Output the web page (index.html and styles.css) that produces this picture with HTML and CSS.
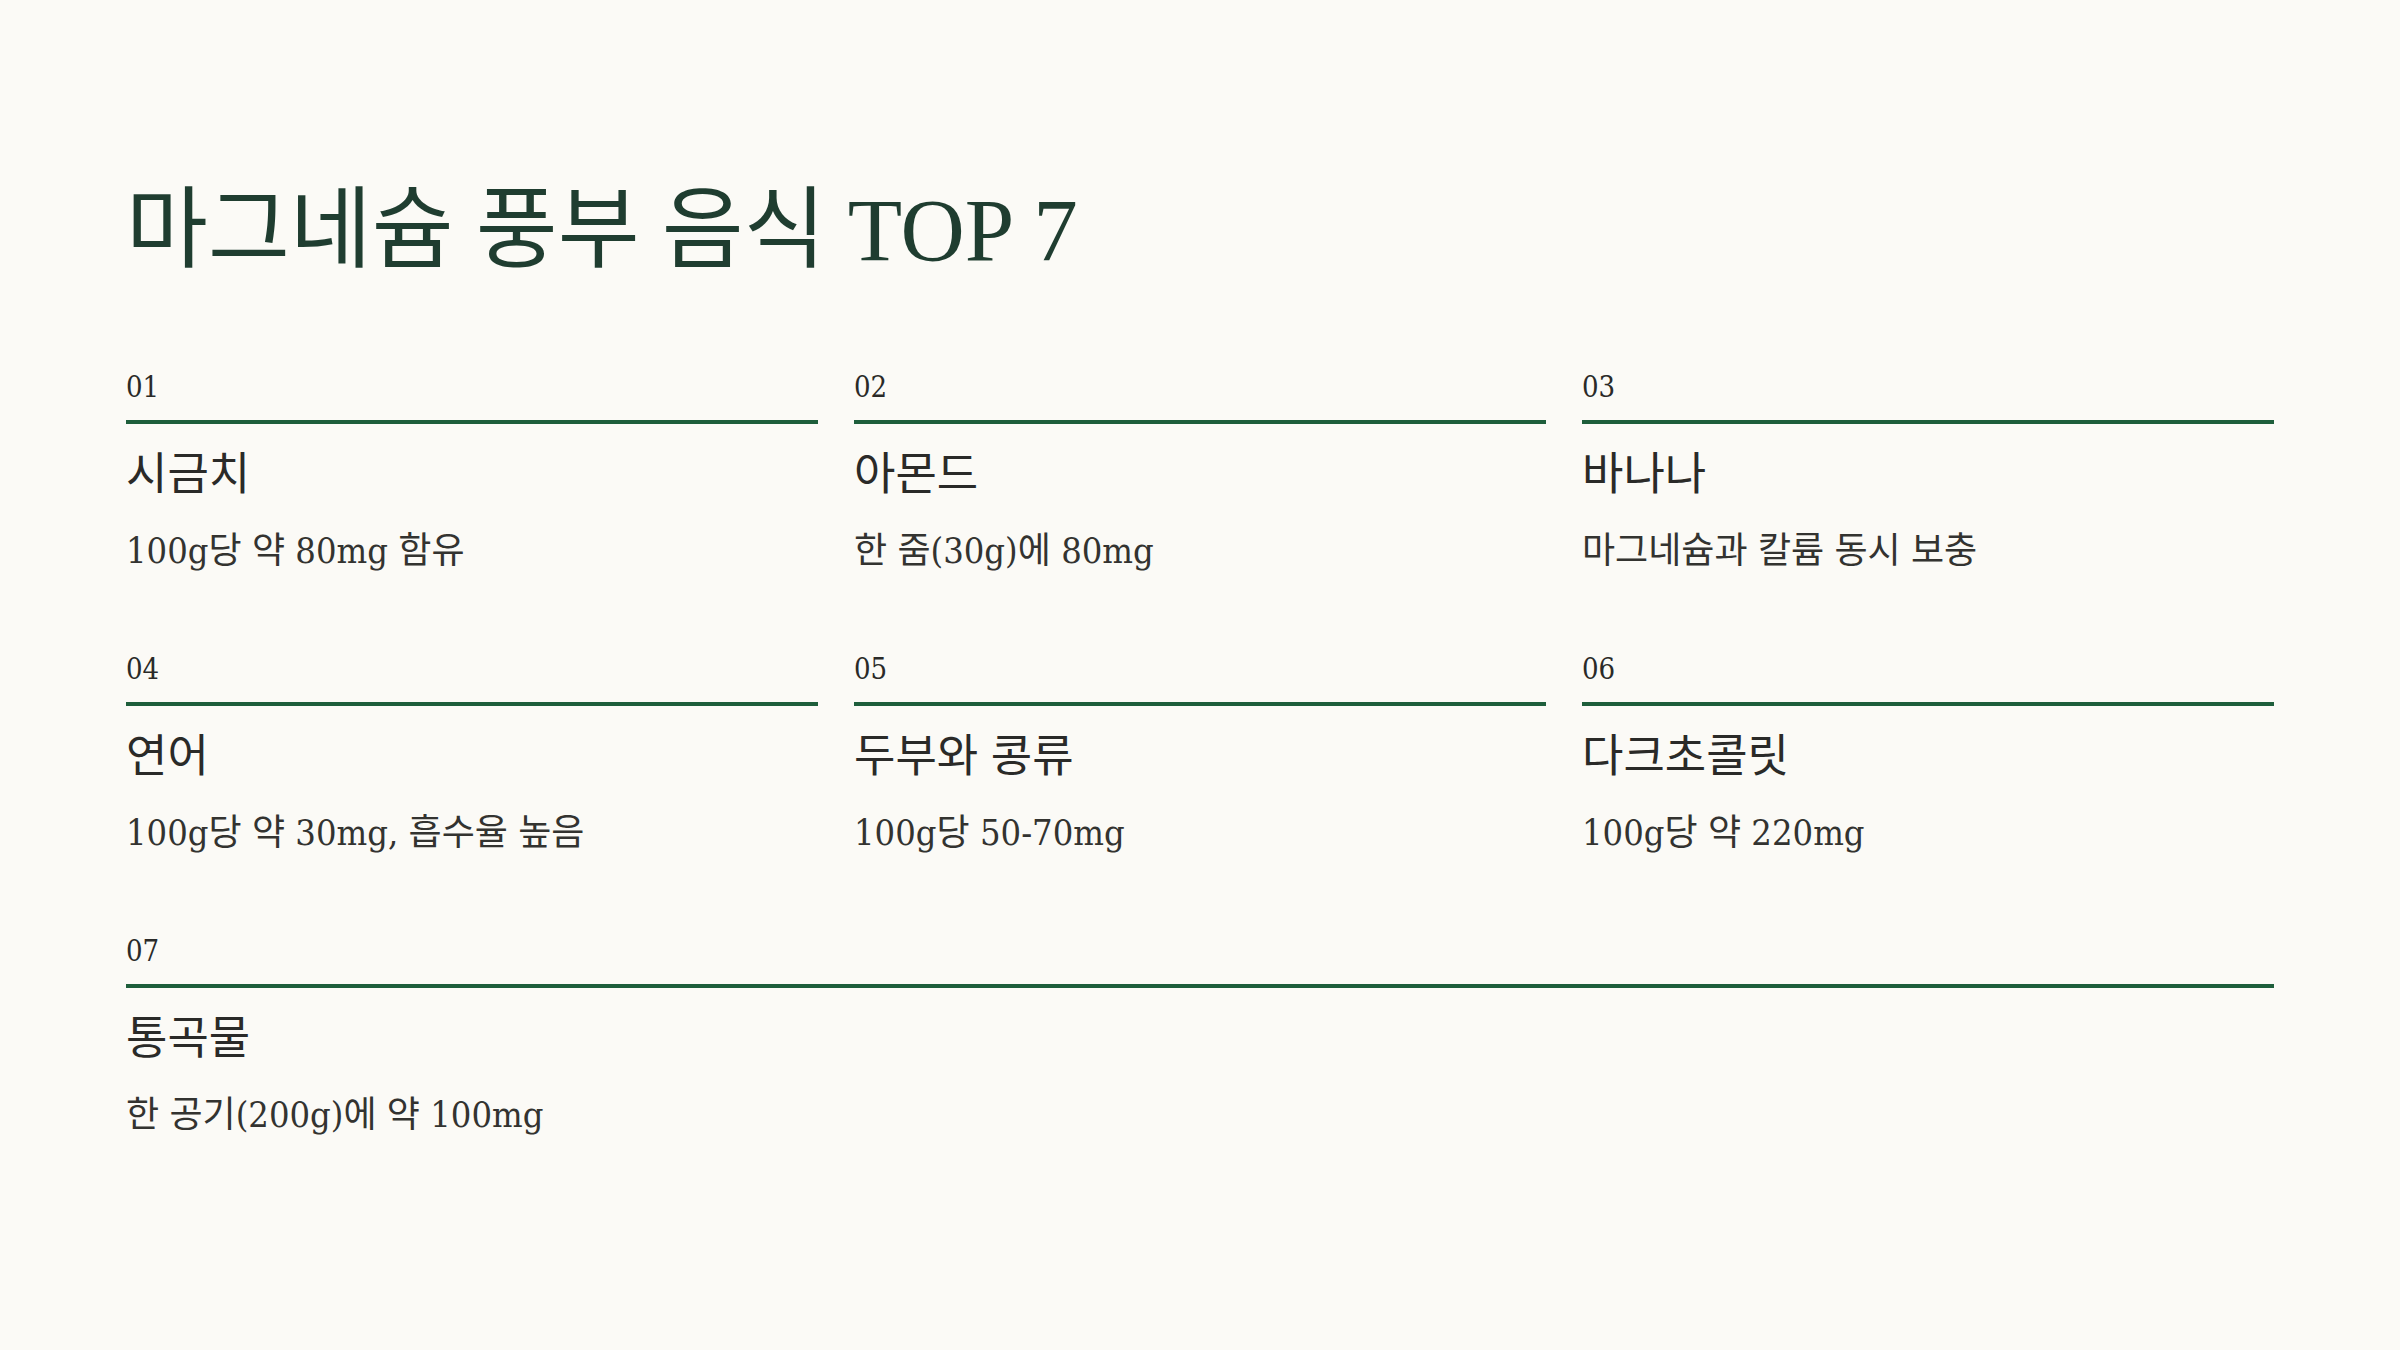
FILE: index.html
```html
<!DOCTYPE html>
<html lang="ko">
<head>
<meta charset="utf-8">
<title>마그네슘 풍부 음식 TOP 7</title>
<link rel="stylesheet" href="styles.css">
</head>
<body>
<main class="page">
  <h1 class="title">마그네슘 풍부 음식 TOP 7</h1>
  <section class="grid">
    <article class="item">
      <div class="num">01</div>
      <div class="body">
        <h2 class="name">시금치</h2>
        <p class="desc">100g당 약 80mg 함유</p>
      </div>
    </article>
    <article class="item">
      <div class="num">02</div>
      <div class="body">
        <h2 class="name">아몬드</h2>
        <p class="desc">한 줌(30g)에 80mg</p>
      </div>
    </article>
    <article class="item">
      <div class="num">03</div>
      <div class="body">
        <h2 class="name">바나나</h2>
        <p class="desc">마그네슘과 칼륨 동시 보충</p>
      </div>
    </article>
    <article class="item">
      <div class="num">04</div>
      <div class="body">
        <h2 class="name">연어</h2>
        <p class="desc">100g당 약 30mg, 흡수율 높음</p>
      </div>
    </article>
    <article class="item">
      <div class="num">05</div>
      <div class="body">
        <h2 class="name">두부와 콩류</h2>
        <p class="desc">100g당 50-70mg</p>
      </div>
    </article>
    <article class="item">
      <div class="num">06</div>
      <div class="body">
        <h2 class="name">다크초콜릿</h2>
        <p class="desc">100g당 약 220mg</p>
      </div>
    </article>
    <article class="item item-wide">
      <div class="num">07</div>
      <div class="body">
        <h2 class="name">통곡물</h2>
        <p class="desc">한 공기(200g)에 약 100mg</p>
      </div>
    </article>
  </section>
</main>
</body>
</html>
```
FILE: styles.css
```css
html, body {
  margin: 0;
  padding: 0;
  background: #fbfaf6;
}
body {
  font-family: "Liberation Serif", "Noto Sans CJK KR", serif;
  color: #2a2a28;
}
.page {
  width: 2400px;
  height: 1350px;
  box-sizing: border-box;
  padding: 179px 126px 0 126px;
}
.title {
  margin: 0 0 90px 0;
  font-size: 89px;
  line-height: 102px;
  font-weight: 400;
  color: #1f3d30;
  letter-spacing: 0;
}
.grid {
  display: grid;
  grid-template-columns: repeat(3, 1fr);
  column-gap: 36px;
  row-gap: 78px;
}
.item-wide {
  grid-column: 1 / -1;
}
.num {
  font-family: "DejaVu Serif Condensed", "Liberation Serif", serif;
  font-size: 29px;
  line-height: 32px;
  margin-bottom: 17px;
  color: #2a2a28;
}
.body {
  border-top: 4px solid #1e5e3b;
  padding-top: 19px;
}
.name {
  margin: 0;
  font-size: 45px;
  line-height: 55px;
  font-weight: 400;
  font-family: "Noto Sans CJK KR", sans-serif;
  color: #2a2a28;
}
.desc {
  margin: 29px 0 0 0;
  font-family: "DejaVu Serif Condensed", "Liberation Serif", "Noto Sans CJK KR", serif;
  font-size: 36px;
  line-height: 48px;
  color: #333330;
}
```
